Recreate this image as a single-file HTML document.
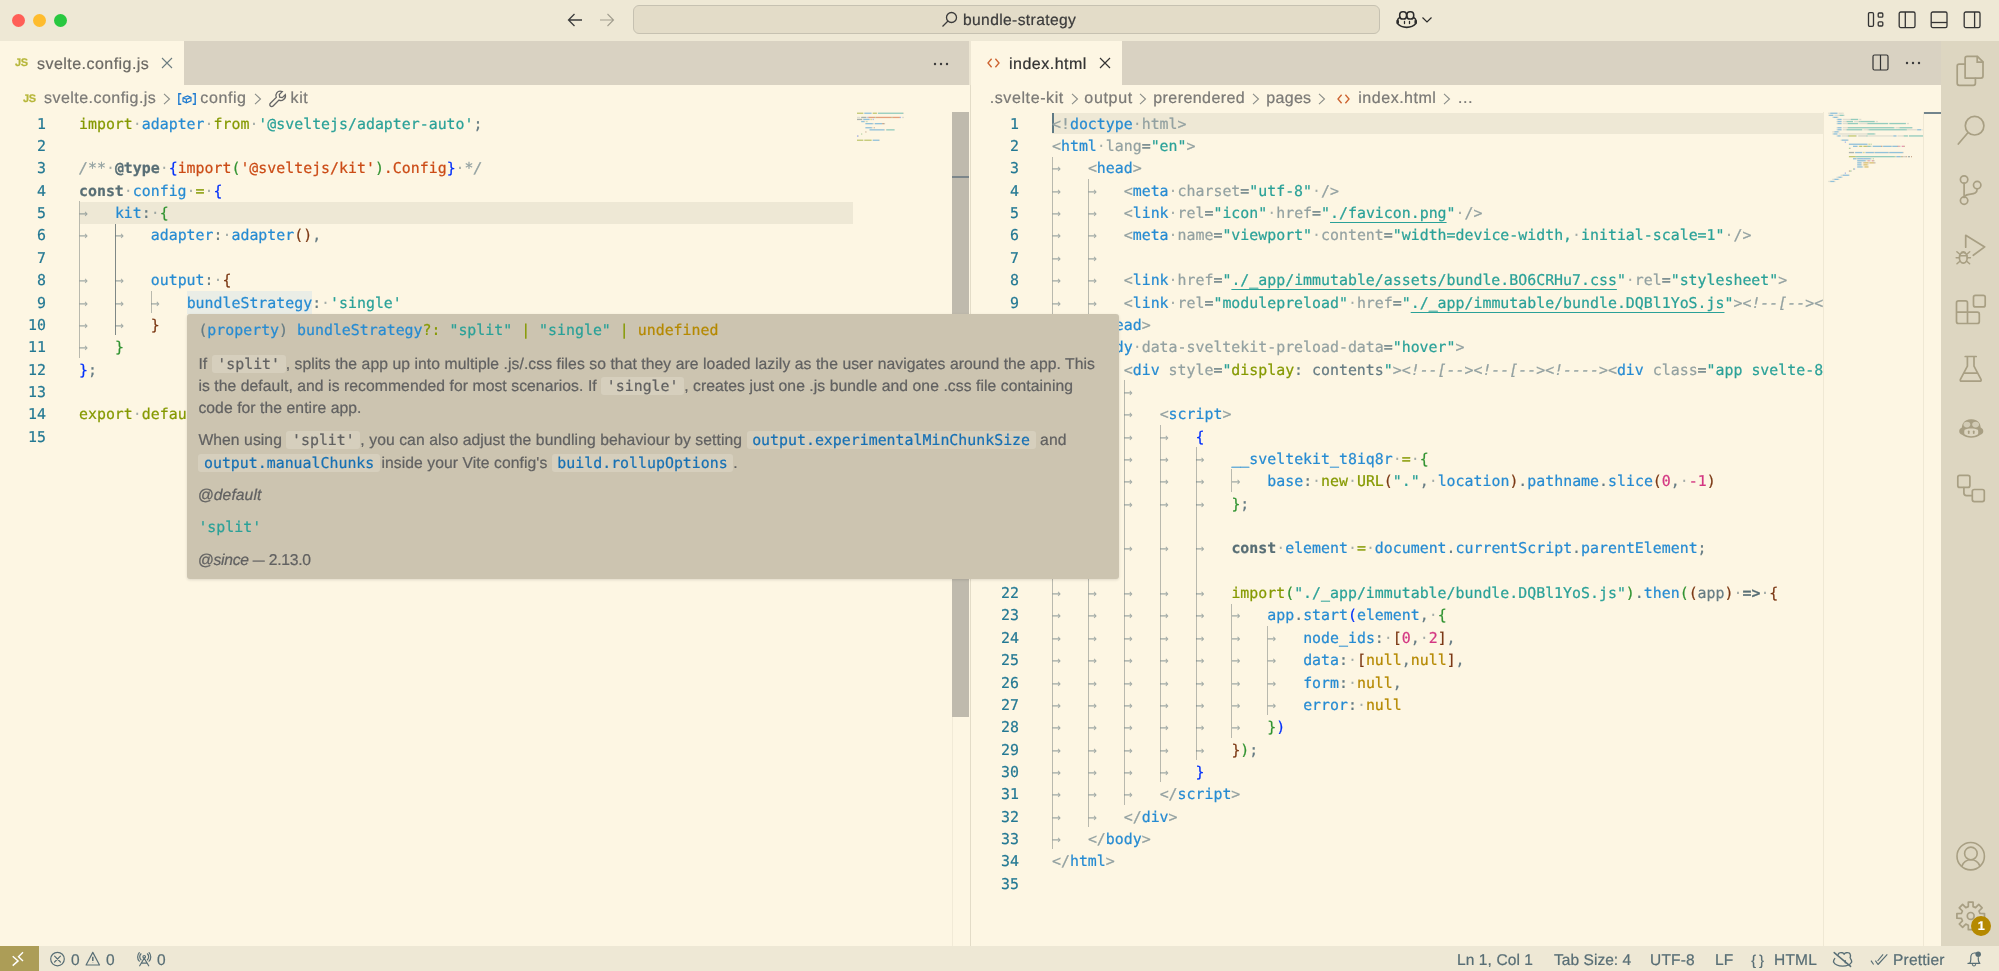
<!DOCTYPE html>
<html lang="en"><head><meta charset="utf-8"><title>bundle-strategy</title>
<style>
*{box-sizing:border-box}
html,body{margin:0;padding:0}
body{width:1999px;height:971px;position:relative;overflow:hidden;background:#FDF6E3;font-family:"Liberation Sans",sans-serif;color:#586E75;-webkit-font-smoothing:antialiased;-webkit-text-stroke:.22px currentColor;text-rendering:geometricPrecision}
.abs{position:absolute}
#title{position:absolute;left:0;top:0;width:1999px;height:41px;background:#EEE8D5}
.tl{position:absolute;top:14px;width:13px;height:13px;border-radius:50%}
#cc{position:absolute;left:633px;top:5px;width:747px;height:28.6px;border-radius:6px;background:#E3DCC8;border:1px solid #C6C1B1}
#cctext{position:absolute;left:963px;top:10.5px;font-size:15.6px;line-height:20px;color:#3B3B3B;letter-spacing:.38px;white-space:nowrap}
.tabs{position:absolute;top:41px;height:44px;background:#D9D2C2}
.tab{position:absolute;top:0;height:44px;background:#FDF6E3}
.tabtxt{position:absolute;top:13.6px;font-size:16px;line-height:20px;white-space:nowrap;color:rgba(51,51,51,.7)}
.bc{position:absolute;top:85px;height:27px;background:#FDF6E3;font-size:16px;line-height:28.8px;color:rgba(97,97,97,.82);white-space:nowrap}
.bc span{position:absolute;top:0}
.ed{position:absolute;top:111.8px;overflow:hidden;font-family:"DejaVu Sans Mono","Liberation Mono",monospace;font-size:14.9px;line-height:22.353px;color:#657B83}
.ln{position:absolute;left:0;white-space:pre;height:22.353px}
.no{position:absolute;right:0;text-align:right;color:#237893;height:22.353px}
.nums{position:absolute;top:111.8px;font-family:"DejaVu Sans Mono","Liberation Mono",monospace;font-size:14.9px;line-height:22.353px}
.gd{position:absolute;width:1px;background:#B9B9AE}
.ga{background:#7F8886;width:1.3px}
.ws{color:rgba(88,110,117,.55);-webkit-text-stroke:0}
.k{color:#859900}.v{color:#268BD2}.s{color:#2AA198}.c{color:#93A1A1;font-style:italic}
.st{color:#586E75;font-weight:bold}.ty{color:#CB4B16}.n{color:#D33682}.nl{color:#B58900}
.b1{color:#0431FA}.b2{color:#319331}.b3{color:#7B3814}
.t{color:#268BD2}.a{color:#93A1A1}.g{color:#93A1A1}.p{color:#657B83}
.u{text-decoration:underline;text-underline-offset:3.5px;text-decoration-thickness:1px}
.hl{background:#EAEDE6;padding:2.6px 0 2.2px}
#act{position:absolute;left:1941px;top:41px;width:58px;height:905px;background:#DDD6C1}
#status{position:absolute;left:0;top:945.5px;width:1999px;height:25.5px;background:#EEE8D5;font-size:15.5px;color:#586E75}
#status span{position:absolute;top:0;line-height:29px;white-space:nowrap}
#hover{position:absolute;left:186.7px;top:314px;width:932px;height:264.5px;background:#CCC4B0;border-radius:3px;color:#616161;font-size:15.7px;box-shadow:0 1px 3px rgba(0,0,0,.12)}
#hover .m{font-family:"DejaVu Sans Mono","Liberation Mono",monospace;font-size:14.9px}
#hover div{position:absolute;left:11.7px;white-space:nowrap;letter-spacing:.075px}
#hover code{font-family:"DejaVu Sans Mono","Liberation Mono",monospace;font-size:14.9px;background:#D6CFBD;border-radius:3px;padding:0 5.6px;letter-spacing:0}
#hover code.lk{color:#1670B4}
svg{position:absolute;overflow:visible}
.mini i{position:absolute;height:1.4px;display:block}
</style></head><body style="will-change:transform">

<!-- ================= title bar ================= -->
<div id="title">
  <div class="tl" style="left:12px;background:#FF5F57"></div>
  <div class="tl" style="left:33px;background:#FEBC2E"></div>
  <div class="tl" style="left:53.5px;background:#28C840"></div>
  <svg style="left:566.7px;top:12.3px" width="16" height="16" viewBox="0 0 16 16" fill="none" stroke="#3B3B3B" stroke-width="1.3"><path d="M15 8H1.5M7.5 2L1.5 8l6 6"/></svg>
  <svg style="left:599px;top:12.3px" width="16" height="16" viewBox="0 0 16 16" fill="none" stroke="#A29E8F" stroke-width="1.1"><path d="M1 8h13.5M8.5 2l6 6-6 6"/></svg>
  <div id="cc"></div>
  <svg style="left:941px;top:11px" width="17" height="17" viewBox="0 0 17 17" fill="none" stroke="#3B3B3B" stroke-width="1.3"><circle cx="10.5" cy="6.5" r="5"/><path d="M7 10L1.5 15.5"/></svg>
  <div id="cctext">bundle-strategy</div>
  <!-- copilot -->
  <svg style="left:1390px;top:5px" width="30" height="30" viewBox="1390 5 30 30" fill="none" stroke="#2B2B2B" stroke-width="1.55" stroke-linecap="round" stroke-linejoin="round">
    <rect x="1399.700" y="11.700" width="6.800" height="7.300" rx="3.100"/>
    <rect x="1406.900" y="11.700" width="6.800" height="7.300" rx="3.100"/>
    <path d="M1399.800 17.400c-1.400.9-2.200 1.700-2.300 2.900v3.300c2.100 2.500 5.500 3.800 9.200 3.800s7.100-1.300 9.200-3.800v-3.300c-.1-1.200-.9-2-2.300-2.900"/>
    <path d="M1397.700 20.200v3.300M1415.700 20.200v3.300" stroke-width="2.500" stroke-linecap="butt"/>
    <path d="M1404.500 21.400v2.100M1409.500 21.400v2.100" stroke-width="1.300"/>
  </svg>
  <svg style="left:1421.600px;top:17px" width="10" height="6" viewBox="0 0 10 6" fill="none" stroke="#2B2B2B" stroke-width="1.200"><path d="M.500.500L5 5 9.500.500"/></svg>
  <!-- layout icons -->
  <svg style="left:1867px;top:11px" width="18" height="18" viewBox="0 0 18 18" fill="none" stroke="#333" stroke-width="1.3"><rect x="1.5" y="1.7" width="5" height="13.6" rx="1.2"/><rect x="11.2" y="2" width="4.6" height="4.2" rx="1"/><rect x="11.2" y="10.8" width="4.6" height="4.2" rx="1"/></svg>
  <svg style="left:1898px;top:11px" width="18" height="18" viewBox="0 0 18 18" fill="none" stroke="#333" stroke-width="1.3"><rect x="1.2" y="1" width="15.8" height="15.6" rx="1.6"/><path d="M7.3 1v15.6"/></svg>
  <svg style="left:1930px;top:11px" width="18" height="18" viewBox="0 0 18 18" fill="none" stroke="#333" stroke-width="1.3"><rect x="1.2" y="1" width="15.8" height="15.6" rx="1.6"/><path d="M1.2 11.5h15.8"/></svg>
  <svg style="left:1963px;top:11px" width="18" height="18" viewBox="0 0 18 18" fill="none" stroke="#333" stroke-width="1.3"><rect x="1.2" y="1" width="15.8" height="15.6" rx="1.6"/><path d="M11.6 1v15.6"/></svg>
</div>

<!-- ================= left group ================= -->
<div class="tabs" style="left:0;width:970px">
  <div class="tab" style="left:0;width:184px">
    <span class="abs" style="left:15px;top:14px;font-size:11px;font-weight:bold;color:#B7B73B;line-height:16px;letter-spacing:-.3px">JS</span>
    <span class="tabtxt" style="left:37px;letter-spacing:.46px">svelte.config.js</span>
    <svg style="left:161px;top:16px" width="12" height="12" viewBox="0 0 12 12" fill="none" stroke="#6B7C80" stroke-width="1.1"><path d="M1 1l10 10M11 1L1 11"/></svg>
  </div>
  <svg style="left:932.6px;top:20.5px" width="16" height="4" viewBox="0 0 16 4" fill="#3B3B3B"><circle cx="2" cy="2" r="1.2"/><circle cx="8" cy="2" r="1.2"/><circle cx="14" cy="2" r="1.2"/></svg>
</div>
<div class="bc" style="left:0;width:970px">
  <span style="left:23px;font-size:11px;font-weight:bold;color:#B7B73B;letter-spacing:-.3px">JS</span>
  <span style="left:44px;letter-spacing:.46px">svelte.config.js</span>
  <svg style="left:163px;top:8px" width="8" height="12" viewBox="0 0 8 12" fill="none" stroke="#8A8D88" stroke-width="1.1"><path d="M1 .8L6.5 6 1 11.2"/></svg>
  <svg style="left:177.6px;top:7.5px" width="18" height="12" viewBox="0 0 18 12" fill="none" stroke="#1F7BD0" stroke-width="1.4"><path d="M3.300 .7H.8v10.600h2.500M14.700 .7h2.500v10.600h-2.500"/><path d="M5 4.800l4.600-1.900 3.400 1.500v3.400l-4.600 2L5 8.300z M5 4.800l3.400 1.500 4.600-1.900 M8.400 6.300v3.500" stroke-width="1.2"/></svg>
  <span style="left:200.3px;letter-spacing:.6px">config</span>
  <svg style="left:254px;top:8px" width="8" height="12" viewBox="0 0 8 12" fill="none" stroke="#8A8D88" stroke-width="1.1"><path d="M1 .8L6.5 6 1 11.2"/></svg>
  <svg style="left:269px;top:4.5px" width="18" height="18" viewBox="0 0 18 18" fill="none" stroke="#666" stroke-width="1.3"><path d="M16.3 4.6l-3 3-2.6-.4-.4-2.6 3-3C11.3.9 9 1.3 7.8 2.8 6.700 4.200 6.600 5.900 7.300 7.400L1.400 13.300c-.800.800-.800 2 0 2.700.700.800 1.900.800 2.700 0l5.900-5.900c1.500.7 3.300.5 4.600-.600C16.100 8.300 16.800 6.300 16.300 4.600z"/></svg>
  <span style="left:290.5px;letter-spacing:.65px">kit</span>
</div>
<div class="nums" style="left:0;width:46px;height:835px">
<div class="no" style="top:0.90px">1</div>
<div class="no" style="top:23.25px">2</div>
<div class="no" style="top:45.61px">3</div>
<div class="no" style="top:67.96px">4</div>
<div class="no" style="top:90.31px">5</div>
<div class="no" style="top:112.67px">6</div>
<div class="no" style="top:135.02px">7</div>
<div class="no" style="top:157.37px">8</div>
<div class="no" style="top:179.72px">9</div>
<div class="no" style="top:202.08px">10</div>
<div class="no" style="top:224.43px">11</div>
<div class="no" style="top:246.78px">12</div>
<div class="no" style="top:269.14px">13</div>
<div class="no" style="top:291.49px">14</div>
<div class="no" style="top:313.84px">15</div>
</div>
<div class="abs" style="left:79px;top:202px;width:774px;height:21.7px;background:#EEE8D5"></div>
<div class="ed" style="left:79px;width:774px;height:835px">
<div class="gd" style="left:0.00px;top:89.41px;height:156.47px"></div><div class="gd ga" style="left:35.88px;top:111.77px;height:111.77px"></div><div class="gd" style="left:71.76px;top:178.82px;height:22.35px"></div>
<div class="ln" style="top:0.90px"><span class="k">import</span><span class="ws">·</span><span class="v">adapter</span><span class="ws">·</span><span class="k">from</span><span class="ws">·</span><span class="s">'@sveltejs/adapter-auto'</span><span class="p">;</span></div>
<div class="ln" style="top:23.25px"></div>
<div class="ln" style="top:45.61px"><span class="c">/**</span><span class="ws">·</span><span class="st">@type</span><span class="ws">·</span><span class="b1">{</span><span class="ty">import</span><span class="b2">(</span><span class="ty">'@sveltejs/kit'</span><span class="b2">)</span><span class="ty">.Config</span><span class="b1">}</span><span class="ws">·</span><span class="c">*/</span></div>
<div class="ln" style="top:67.96px"><span class="st">const</span><span class="ws">·</span><span class="v">config</span><span class="ws">·</span><span class="k">=</span><span class="ws">·</span><span class="b1">{</span></div>
<div class="ln" style="top:90.31px"><span class="ws">→   </span><span class="v">kit</span><span class="p">:</span><span class="ws">·</span><span class="b2">{</span></div>
<div class="ln" style="top:112.67px"><span class="ws">→   </span><span class="ws">→   </span><span class="v">adapter</span><span class="p">:</span><span class="ws">·</span><span class="v">adapter</span><span class="b3">()</span><span class="p">,</span></div>
<div class="ln" style="top:135.02px"></div>
<div class="ln" style="top:157.37px"><span class="ws">→   </span><span class="ws">→   </span><span class="v">output</span><span class="p">:</span><span class="ws">·</span><span class="b3">{</span></div>
<div class="ln" style="top:179.72px"><span class="ws">→   </span><span class="ws">→   </span><span class="ws">→   </span><span class="v hl">bundleStrategy</span><span class="p">:</span><span class="ws">·</span><span class="s">'single'</span></div>
<div class="ln" style="top:202.08px"><span class="ws">→   </span><span class="ws">→   </span><span class="b3">}</span></div>
<div class="ln" style="top:224.43px"><span class="ws">→   </span><span class="b2">}</span></div>
<div class="ln" style="top:246.78px"><span class="b1">}</span><span class="p">;</span></div>
<div class="ln" style="top:269.14px"></div>
<div class="ln" style="top:291.49px"><span class="k">export</span><span class="ws">·</span><span class="k">default</span><span class="ws">·</span><span class="v">config</span><span class="p">;</span></div>
<div class="ln" style="top:313.84px"></div>
</div>
<!-- left minimap + scrollbar -->
<div class="mini"><svg style="left:0;top:0" width="1999" height="971"><rect x="857.0" y="112.6" width="6.3" height="1.3" fill="#859900" fill-opacity="0.5"/><rect x="864.3" y="112.6" width="7.3" height="1.3" fill="#268BD2" fill-opacity="0.5"/><rect x="872.7" y="112.6" width="4.2" height="1.3" fill="#859900" fill-opacity="0.5"/><rect x="877.9" y="112.6" width="25.1" height="1.3" fill="#2AA198" fill-opacity="0.5"/><rect x="902.9" y="112.6" width="1.0" height="1.3" fill="#657B83" fill-opacity="0.28"/><rect x="857.0" y="116.8" width="3.1" height="1.3" fill="#93A1A1" fill-opacity="0.28"/><rect x="861.2" y="116.8" width="5.2" height="1.3" fill="#586E75" fill-opacity="0.5"/><rect x="867.4" y="116.8" width="1.0" height="1.3" fill="#0431FA" fill-opacity="0.4"/><rect x="868.5" y="116.8" width="6.3" height="1.3" fill="#CB4B16" fill-opacity="0.5"/><rect x="874.7" y="116.8" width="1.0" height="1.3" fill="#319331" fill-opacity="0.4"/><rect x="875.8" y="116.8" width="15.7" height="1.3" fill="#CB4B16" fill-opacity="0.5"/><rect x="891.5" y="116.8" width="1.0" height="1.3" fill="#319331" fill-opacity="0.4"/><rect x="892.5" y="116.8" width="7.3" height="1.3" fill="#CB4B16" fill-opacity="0.5"/><rect x="899.8" y="116.8" width="1.0" height="1.3" fill="#0431FA" fill-opacity="0.4"/><rect x="901.9" y="116.8" width="2.1" height="1.3" fill="#93A1A1" fill-opacity="0.28"/><rect x="857.0" y="118.8" width="5.2" height="1.3" fill="#586E75" fill-opacity="0.5"/><rect x="863.3" y="118.8" width="6.3" height="1.3" fill="#268BD2" fill-opacity="0.5"/><rect x="870.6" y="118.8" width="1.0" height="1.3" fill="#859900" fill-opacity="0.5"/><rect x="872.7" y="118.8" width="1.0" height="1.3" fill="#0431FA" fill-opacity="0.4"/><rect x="861.2" y="120.9" width="3.1" height="1.3" fill="#268BD2" fill-opacity="0.5"/><rect x="864.3" y="120.9" width="1.0" height="1.3" fill="#657B83" fill-opacity="0.28"/><rect x="866.4" y="120.9" width="1.0" height="1.3" fill="#319331" fill-opacity="0.4"/><rect x="865.4" y="123.0" width="7.3" height="1.3" fill="#268BD2" fill-opacity="0.5"/><rect x="872.7" y="123.0" width="1.0" height="1.3" fill="#657B83" fill-opacity="0.28"/><rect x="874.7" y="123.0" width="7.3" height="1.3" fill="#268BD2" fill-opacity="0.5"/><rect x="882.1" y="123.0" width="2.1" height="1.3" fill="#7B3814" fill-opacity="0.4"/><rect x="884.1" y="123.0" width="1.0" height="1.3" fill="#657B83" fill-opacity="0.28"/><rect x="865.4" y="127.1" width="6.3" height="1.3" fill="#268BD2" fill-opacity="0.5"/><rect x="871.6" y="127.1" width="1.0" height="1.3" fill="#657B83" fill-opacity="0.28"/><rect x="873.7" y="127.1" width="1.0" height="1.3" fill="#7B3814" fill-opacity="0.4"/><rect x="869.5" y="129.2" width="14.6" height="1.3" fill="#268BD2" fill-opacity="0.5"/><rect x="884.1" y="129.2" width="1.0" height="1.3" fill="#657B83" fill-opacity="0.28"/><rect x="886.2" y="129.2" width="8.4" height="1.3" fill="#2AA198" fill-opacity="0.5"/><rect x="865.4" y="131.3" width="1.0" height="1.3" fill="#7B3814" fill-opacity="0.4"/><rect x="861.2" y="133.4" width="1.0" height="1.3" fill="#319331" fill-opacity="0.4"/><rect x="857.0" y="135.4" width="1.0" height="1.3" fill="#0431FA" fill-opacity="0.4"/><rect x="858.0" y="135.4" width="1.0" height="1.3" fill="#657B83" fill-opacity="0.28"/><rect x="857.0" y="139.6" width="6.3" height="1.3" fill="#859900" fill-opacity="0.5"/><rect x="864.3" y="139.6" width="7.3" height="1.3" fill="#859900" fill-opacity="0.5"/><rect x="872.7" y="139.6" width="6.3" height="1.3" fill="#268BD2" fill-opacity="0.5"/><rect x="878.9" y="139.6" width="1.0" height="1.3" fill="#657B83" fill-opacity="0.28"/></svg></div>
<div class="abs" style="left:952.3px;top:112px;width:17.1px;height:605px;background:#BFBAAD"></div>
<div class="abs" style="left:952px;top:717px;width:1px;height:229px;background:#F1EAD7"></div>
<div class="abs" style="left:952px;top:175.5px;width:17px;height:2.5px;background:#7C868A"></div>
<div class="abs" style="left:970px;top:85px;width:1px;height:861px;background:#E3DCC8"></div>
<div class="abs" style="left:969.4px;top:41px;width:1.7px;height:44px;background:#EDE6D3"></div>

<!-- ================= right group ================= -->
<div class="tabs" style="left:971px;width:970px">
  <div class="tab" style="left:0;width:151px">
    <svg style="left:16px;top:17px" width="13" height="10" viewBox="0 0 13 10" fill="none" stroke="#CD6431" stroke-width="1.35"><path d="M4.600.800L1 5l3.600 4.200M8.400.8L12 5 8.400 9.200"/></svg>
    <span class="tabtxt" style="left:38px;color:#333;letter-spacing:.5px">index.html</span>
    <svg style="left:128px;top:16px" width="12" height="12" viewBox="0 0 12 12" fill="none" stroke="#333" stroke-width="1.2"><path d="M1 1l10 10M11 1L1 11"/></svg>
  </div>
  <svg style="left:901px;top:13px" width="17" height="17" viewBox="0 0 17 17" fill="none" stroke="#333" stroke-width="1.2"><rect x="1" y="1" width="15" height="15" rx="1.5"/><path d="M8.5 1v15"/></svg>
  <svg style="left:934px;top:20px" width="16" height="4" viewBox="0 0 16 4" fill="#3B3B3B"><circle cx="2" cy="2" r="1.2"/><circle cx="8" cy="2" r="1.2"/><circle cx="14" cy="2" r="1.2"/></svg>
</div>
<div class="bc" style="left:971px;width:970px">
  <span style="left:18.7px;letter-spacing:.6px">.svelte-kit</span>
  <svg style="left:100px;top:8px" width="8" height="12" viewBox="0 0 8 12" fill="none" stroke="#8A8D88" stroke-width="1.1"><path d="M1 .8L6.5 6 1 11.2"/></svg>
  <span style="left:113.3px;letter-spacing:.68px">output</span>
  <svg style="left:168px;top:8px" width="8" height="12" viewBox="0 0 8 12" fill="none" stroke="#8A8D88" stroke-width="1.1"><path d="M1 .8L6.5 6 1 11.2"/></svg>
  <span style="left:182.3px;letter-spacing:.42px">prerendered</span>
  <svg style="left:281px;top:8px" width="8" height="12" viewBox="0 0 8 12" fill="none" stroke="#8A8D88" stroke-width="1.1"><path d="M1 .8L6.5 6 1 11.2"/></svg>
  <span style="left:295.3px;letter-spacing:.3px">pages</span>
  <svg style="left:347px;top:8px" width="8" height="12" viewBox="0 0 8 12" fill="none" stroke="#8A8D88" stroke-width="1.1"><path d="M1 .8L6.5 6 1 11.2"/></svg>
  <svg style="left:366px;top:8.5px" width="13" height="10" viewBox="0 0 13 10" fill="none" stroke="#CD6431" stroke-width="1.35"><path d="M4.600.800L1 5l3.600 4.200M8.400.8L12 5 8.400 9.200"/></svg>
  <span style="left:387.3px;letter-spacing:.52px">index.html</span>
  <svg style="left:472px;top:8px" width="8" height="12" viewBox="0 0 8 12" fill="none" stroke="#8A8D88" stroke-width="1.1"><path d="M1 .8L6.5 6 1 11.2"/></svg>
  <span style="left:486.3px">…</span>
</div>
<div class="nums" style="left:971px;width:48px;height:835px">
<div class="no" style="top:0.90px">1</div>
<div class="no" style="top:23.25px">2</div>
<div class="no" style="top:45.61px">3</div>
<div class="no" style="top:67.96px">4</div>
<div class="no" style="top:90.31px">5</div>
<div class="no" style="top:112.67px">6</div>
<div class="no" style="top:135.02px">7</div>
<div class="no" style="top:157.37px">8</div>
<div class="no" style="top:179.72px">9</div>
<div class="no" style="top:202.08px">10</div>
<div class="no" style="top:224.43px">11</div>
<div class="no" style="top:246.78px">12</div>
<div class="no" style="top:269.14px">13</div>
<div class="no" style="top:291.49px">14</div>
<div class="no" style="top:313.84px">15</div>
<div class="no" style="top:336.19px">16</div>
<div class="no" style="top:358.55px">17</div>
<div class="no" style="top:380.90px">18</div>
<div class="no" style="top:403.25px">19</div>
<div class="no" style="top:425.61px">20</div>
<div class="no" style="top:447.96px">21</div>
<div class="no" style="top:470.31px">22</div>
<div class="no" style="top:492.67px">23</div>
<div class="no" style="top:515.02px">24</div>
<div class="no" style="top:537.37px">25</div>
<div class="no" style="top:559.73px">26</div>
<div class="no" style="top:582.08px">27</div>
<div class="no" style="top:604.43px">28</div>
<div class="no" style="top:626.78px">29</div>
<div class="no" style="top:649.14px">30</div>
<div class="no" style="top:671.49px">31</div>
<div class="no" style="top:693.84px">32</div>
<div class="no" style="top:716.20px">33</div>
<div class="no" style="top:738.55px">34</div>
<div class="no" style="top:760.90px">35</div>
</div>
<div class="abs" style="left:1052px;top:112.5px;width:771.5px;height:21.7px;background:#EEE8D5"></div>
<div class="abs" style="left:1052px;top:113px;width:2px;height:20px;background:#5F7A85"></div>
<div class="ed" style="left:1052px;width:771px;height:835px">
<div class="gd" style="left:0.00px;top:44.71px;height:692.94px"></div><div class="gd" style="left:35.88px;top:67.06px;height:648.24px"></div><div class="gd" style="left:71.76px;top:268.24px;height:424.71px"></div><div class="gd" style="left:107.64px;top:312.94px;height:357.65px"></div><div class="gd" style="left:143.52px;top:335.30px;height:312.94px"></div><div class="gd" style="left:179.40px;top:357.65px;height:22.35px"></div><div class="gd" style="left:179.40px;top:491.77px;height:134.12px"></div><div class="gd" style="left:215.28px;top:514.12px;height:89.41px"></div>
<div class="ln" style="top:0.90px"><span class="g">&lt;!</span><span class="t">doctype</span><span class="ws">·</span><span class="a">html</span><span class="g">&gt;</span></div>
<div class="ln" style="top:23.25px"><span class="g">&lt;</span><span class="t">html</span><span class="ws">·</span><span class="a">lang</span><span class="p">=</span><span class="s">"en"</span><span class="g">&gt;</span></div>
<div class="ln" style="top:45.61px"><span class="ws">→   </span><span class="g">&lt;</span><span class="t">head</span><span class="g">&gt;</span></div>
<div class="ln" style="top:67.96px"><span class="ws">→   </span><span class="ws">→   </span><span class="g">&lt;</span><span class="t">meta</span><span class="ws">·</span><span class="a">charset</span><span class="p">=</span><span class="s">"utf-8"</span><span class="ws">·</span><span class="g">/&gt;</span></div>
<div class="ln" style="top:90.31px"><span class="ws">→   </span><span class="ws">→   </span><span class="g">&lt;</span><span class="t">link</span><span class="ws">·</span><span class="a">rel</span><span class="p">=</span><span class="s">"icon"</span><span class="ws">·</span><span class="a">href</span><span class="p">=</span><span class="s">"</span><span class="s u">./favicon.png</span><span class="s">"</span><span class="ws">·</span><span class="g">/&gt;</span></div>
<div class="ln" style="top:112.67px"><span class="ws">→   </span><span class="ws">→   </span><span class="g">&lt;</span><span class="t">meta</span><span class="ws">·</span><span class="a">name</span><span class="p">=</span><span class="s">"viewport"</span><span class="ws">·</span><span class="a">content</span><span class="p">=</span><span class="s">"width=device-width,</span><span class="ws">·</span><span class="s">initial-scale=1"</span><span class="ws">·</span><span class="g">/&gt;</span></div>
<div class="ln" style="top:135.02px"><span class="ws">→   </span><span class="ws">→   </span></div>
<div class="ln" style="top:157.37px"><span class="ws">→   </span><span class="ws">→   </span><span class="g">&lt;</span><span class="t">link</span><span class="ws">·</span><span class="a">href</span><span class="p">=</span><span class="s">"</span><span class="s u">./_app/immutable/assets/bundle.BO6CRHu7.css</span><span class="s">"</span><span class="ws">·</span><span class="a">rel</span><span class="p">=</span><span class="s">"stylesheet"</span><span class="g">&gt;</span></div>
<div class="ln" style="top:179.72px"><span class="ws">→   </span><span class="ws">→   </span><span class="g">&lt;</span><span class="t">link</span><span class="ws">·</span><span class="a">rel</span><span class="p">=</span><span class="s">"modulepreload"</span><span class="ws">·</span><span class="a">href</span><span class="p">=</span><span class="s">"</span><span class="s u">./_app/immutable/bundle.DQBl1YoS.js</span><span class="s">"</span><span class="g">&gt;</span><span class="c">&lt;!--[--&gt;</span><span class="g">&lt;</span><span class="t">link</span><span class="ws">·</span><span class="a">rel</span></div>
<div class="ln" style="top:202.08px"><span class="ws">→   </span><span class="g">&lt;/</span><span class="t">head</span><span class="g">&gt;</span></div>
<div class="ln" style="top:224.43px"><span class="ws">→   </span><span class="g">&lt;</span><span class="t">body</span><span class="ws">·</span><span class="a">data-sveltekit-preload-data</span><span class="p">=</span><span class="s">"hover"</span><span class="g">&gt;</span></div>
<div class="ln" style="top:246.78px"><span class="ws">→   →   </span><span class="g">&lt;</span><span class="t">div</span> <span class="a">style</span>=<span class="s">"</span><span class="k">display</span>: contents<span class="s">"</span><span class="g">&gt;</span><span class="c">&lt;!--[--&gt;</span><span class="c">&lt;!--[--&gt;</span><span class="c">&lt;!----&gt;</span><span class="g">&lt;</span><span class="t">div</span> <span class="a">class</span>=<span class="s">"app svelte-8hd3kl"</span><span class="g">&gt;</span></div>
<div class="ln" style="top:269.14px"><span class="ws">→   </span><span class="ws">→   </span><span class="ws">→   </span></div>
<div class="ln" style="top:291.49px"><span class="ws">→   </span><span class="ws">→   </span><span class="ws">→   </span><span class="g">&lt;</span><span class="t">script</span><span class="g">&gt;</span></div>
<div class="ln" style="top:313.84px"><span class="ws">→   </span><span class="ws">→   </span><span class="ws">→   </span><span class="ws">→   </span><span class="b1">{</span></div>
<div class="ln" style="top:336.19px"><span class="ws">→   </span><span class="ws">→   </span><span class="ws">→   </span><span class="ws">→   </span><span class="ws">→   </span><span class="v">__sveltekit_t8iq8r</span><span class="ws">·</span><span class="k">=</span><span class="ws">·</span><span class="b2">{</span></div>
<div class="ln" style="top:358.55px"><span class="ws">→   </span><span class="ws">→   </span><span class="ws">→   </span><span class="ws">→   </span><span class="ws">→   </span><span class="ws">→   </span><span class="v">base</span><span class="p">:</span><span class="ws">·</span><span class="k">new</span><span class="ws">·</span><span class="k">URL</span><span class="b3">(</span><span class="s">"."</span><span class="p">,</span><span class="ws">·</span><span class="v">location</span><span class="b3">)</span><span class="p">.</span><span class="v">pathname</span><span class="p">.</span><span class="v">slice</span><span class="b3">(</span><span class="n">0</span><span class="p">,</span><span class="ws">·</span><span class="n">-1</span><span class="b3">)</span></div>
<div class="ln" style="top:380.90px"><span class="ws">→   </span><span class="ws">→   </span><span class="ws">→   </span><span class="ws">→   </span><span class="ws">→   </span><span class="b2">}</span><span class="p">;</span></div>
<div class="ln" style="top:403.25px"></div>
<div class="ln" style="top:425.61px"><span class="ws">→   </span><span class="ws">→   </span><span class="ws">→   </span><span class="ws">→   </span><span class="ws">→   </span><span class="st">const</span><span class="ws">·</span><span class="v">element</span><span class="ws">·</span><span class="k">=</span><span class="ws">·</span><span class="v">document</span><span class="p">.</span><span class="v">currentScript</span><span class="p">.</span><span class="v">parentElement</span><span class="p">;</span></div>
<div class="ln" style="top:447.96px"></div>
<div class="ln" style="top:470.31px"><span class="ws">→   </span><span class="ws">→   </span><span class="ws">→   </span><span class="ws">→   </span><span class="ws">→   </span><span class="k">import</span><span class="b2">(</span><span class="s">"./_app/immutable/bundle.DQBl1YoS.js"</span><span class="b2">)</span><span class="p">.</span><span class="v">then</span><span class="b2">(</span><span class="b3">(</span><span class="p">app</span><span class="b3">)</span><span class="ws">·</span><span class="st">=&gt;</span><span class="ws">·</span><span class="b3">{</span></div>
<div class="ln" style="top:492.67px"><span class="ws">→   </span><span class="ws">→   </span><span class="ws">→   </span><span class="ws">→   </span><span class="ws">→   </span><span class="ws">→   </span><span class="v">app</span><span class="p">.</span><span class="v">start</span><span class="b1">(</span><span class="v">element</span><span class="p">,</span><span class="ws">·</span><span class="b2">{</span></div>
<div class="ln" style="top:515.02px"><span class="ws">→   </span><span class="ws">→   </span><span class="ws">→   </span><span class="ws">→   </span><span class="ws">→   </span><span class="ws">→   </span><span class="ws">→   </span><span class="v">node_ids</span><span class="p">:</span><span class="ws">·</span><span class="b3">[</span><span class="n">0</span><span class="p">,</span><span class="ws">·</span><span class="n">2</span><span class="b3">]</span><span class="p">,</span></div>
<div class="ln" style="top:537.37px"><span class="ws">→   </span><span class="ws">→   </span><span class="ws">→   </span><span class="ws">→   </span><span class="ws">→   </span><span class="ws">→   </span><span class="ws">→   </span><span class="v">data</span><span class="p">:</span><span class="ws">·</span><span class="b3">[</span><span class="nl">null</span><span class="p">,</span><span class="nl">null</span><span class="b3">]</span><span class="p">,</span></div>
<div class="ln" style="top:559.73px"><span class="ws">→   </span><span class="ws">→   </span><span class="ws">→   </span><span class="ws">→   </span><span class="ws">→   </span><span class="ws">→   </span><span class="ws">→   </span><span class="v">form</span><span class="p">:</span><span class="ws">·</span><span class="nl">null</span><span class="p">,</span></div>
<div class="ln" style="top:582.08px"><span class="ws">→   </span><span class="ws">→   </span><span class="ws">→   </span><span class="ws">→   </span><span class="ws">→   </span><span class="ws">→   </span><span class="ws">→   </span><span class="v">error</span><span class="p">:</span><span class="ws">·</span><span class="nl">null</span></div>
<div class="ln" style="top:604.43px"><span class="ws">→   </span><span class="ws">→   </span><span class="ws">→   </span><span class="ws">→   </span><span class="ws">→   </span><span class="ws">→   </span><span class="b2">}</span><span class="b1">)</span></div>
<div class="ln" style="top:626.78px"><span class="ws">→   </span><span class="ws">→   </span><span class="ws">→   </span><span class="ws">→   </span><span class="ws">→   </span><span class="b3">}</span><span class="b2">)</span><span class="p">;</span></div>
<div class="ln" style="top:649.14px"><span class="ws">→   </span><span class="ws">→   </span><span class="ws">→   </span><span class="ws">→   </span><span class="b1">}</span></div>
<div class="ln" style="top:671.49px"><span class="ws">→   </span><span class="ws">→   </span><span class="ws">→   </span><span class="g">&lt;/</span><span class="t">script</span><span class="g">&gt;</span></div>
<div class="ln" style="top:693.84px"><span class="ws">→   </span><span class="ws">→   </span><span class="g">&lt;/</span><span class="t">div</span><span class="g">&gt;</span></div>
<div class="ln" style="top:716.20px"><span class="ws">→   </span><span class="g">&lt;/</span><span class="t">body</span><span class="g">&gt;</span></div>
<div class="ln" style="top:738.55px"><span class="g">&lt;/</span><span class="t">html</span><span class="g">&gt;</span></div>
<div class="ln" style="top:760.90px"></div>
</div>
<div class="mini"><svg style="left:0;top:0" width="1999" height="971"><rect x="1828.2" y="112.6" width="2.1" height="1.3" fill="#93A1A1" fill-opacity="0.28"/><rect x="1830.3" y="112.6" width="7.2" height="1.3" fill="#268BD2" fill-opacity="0.5"/><rect x="1838.5" y="112.6" width="4.1" height="1.3" fill="#93A1A1" fill-opacity="0.28"/><rect x="1842.7" y="112.6" width="1.0" height="1.3" fill="#93A1A1" fill-opacity="0.28"/><rect x="1828.2" y="114.7" width="1.0" height="1.3" fill="#93A1A1" fill-opacity="0.28"/><rect x="1829.2" y="114.7" width="4.1" height="1.3" fill="#268BD2" fill-opacity="0.5"/><rect x="1834.4" y="114.7" width="4.1" height="1.3" fill="#93A1A1" fill-opacity="0.28"/><rect x="1838.5" y="114.7" width="1.0" height="1.3" fill="#657B83" fill-opacity="0.28"/><rect x="1839.6" y="114.7" width="4.1" height="1.3" fill="#2AA198" fill-opacity="0.5"/><rect x="1843.7" y="114.7" width="1.0" height="1.3" fill="#93A1A1" fill-opacity="0.28"/><rect x="1832.3" y="116.7" width="1.0" height="1.3" fill="#93A1A1" fill-opacity="0.28"/><rect x="1833.4" y="116.7" width="4.1" height="1.3" fill="#268BD2" fill-opacity="0.5"/><rect x="1837.5" y="116.7" width="1.0" height="1.3" fill="#93A1A1" fill-opacity="0.28"/><rect x="1836.5" y="118.8" width="1.0" height="1.3" fill="#93A1A1" fill-opacity="0.28"/><rect x="1837.5" y="118.8" width="4.1" height="1.3" fill="#268BD2" fill-opacity="0.5"/><rect x="1842.7" y="118.8" width="7.2" height="1.3" fill="#93A1A1" fill-opacity="0.28"/><rect x="1849.9" y="118.8" width="1.0" height="1.3" fill="#657B83" fill-opacity="0.28"/><rect x="1851.0" y="118.8" width="7.2" height="1.3" fill="#2AA198" fill-opacity="0.5"/><rect x="1859.2" y="118.8" width="2.1" height="1.3" fill="#93A1A1" fill-opacity="0.28"/><rect x="1836.5" y="120.9" width="1.0" height="1.3" fill="#93A1A1" fill-opacity="0.28"/><rect x="1837.5" y="120.9" width="4.1" height="1.3" fill="#268BD2" fill-opacity="0.5"/><rect x="1842.7" y="120.9" width="3.1" height="1.3" fill="#93A1A1" fill-opacity="0.28"/><rect x="1845.8" y="120.9" width="1.0" height="1.3" fill="#657B83" fill-opacity="0.28"/><rect x="1846.8" y="120.9" width="6.2" height="1.3" fill="#2AA198" fill-opacity="0.5"/><rect x="1854.1" y="120.9" width="4.1" height="1.3" fill="#93A1A1" fill-opacity="0.28"/><rect x="1858.2" y="120.9" width="1.0" height="1.3" fill="#657B83" fill-opacity="0.28"/><rect x="1859.2" y="120.9" width="1.0" height="1.3" fill="#2AA198" fill-opacity="0.5"/><rect x="1860.3" y="120.9" width="13.5" height="1.3" fill="#2AA198" fill-opacity="0.5"/><rect x="1873.7" y="120.9" width="1.0" height="1.3" fill="#2AA198" fill-opacity="0.5"/><rect x="1875.8" y="120.9" width="2.1" height="1.3" fill="#93A1A1" fill-opacity="0.28"/><rect x="1836.5" y="122.9" width="1.0" height="1.3" fill="#93A1A1" fill-opacity="0.28"/><rect x="1837.5" y="122.9" width="4.1" height="1.3" fill="#268BD2" fill-opacity="0.5"/><rect x="1842.7" y="122.9" width="4.1" height="1.3" fill="#93A1A1" fill-opacity="0.28"/><rect x="1846.8" y="122.9" width="1.0" height="1.3" fill="#657B83" fill-opacity="0.28"/><rect x="1847.9" y="122.9" width="10.3" height="1.3" fill="#2AA198" fill-opacity="0.5"/><rect x="1859.2" y="122.9" width="7.2" height="1.3" fill="#93A1A1" fill-opacity="0.28"/><rect x="1866.5" y="122.9" width="1.0" height="1.3" fill="#657B83" fill-opacity="0.28"/><rect x="1867.5" y="122.9" width="20.7" height="1.3" fill="#2AA198" fill-opacity="0.5"/><rect x="1889.3" y="122.9" width="16.6" height="1.3" fill="#2AA198" fill-opacity="0.5"/><rect x="1906.9" y="122.9" width="2.1" height="1.3" fill="#93A1A1" fill-opacity="0.28"/><rect x="1836.5" y="127.1" width="1.0" height="1.3" fill="#93A1A1" fill-opacity="0.28"/><rect x="1837.5" y="127.1" width="4.1" height="1.3" fill="#268BD2" fill-opacity="0.5"/><rect x="1842.7" y="127.1" width="4.1" height="1.3" fill="#93A1A1" fill-opacity="0.28"/><rect x="1846.8" y="127.1" width="1.0" height="1.3" fill="#657B83" fill-opacity="0.28"/><rect x="1847.9" y="127.1" width="1.0" height="1.3" fill="#2AA198" fill-opacity="0.5"/><rect x="1848.9" y="127.1" width="44.5" height="1.3" fill="#2AA198" fill-opacity="0.5"/><rect x="1893.4" y="127.1" width="1.0" height="1.3" fill="#2AA198" fill-opacity="0.5"/><rect x="1895.5" y="127.1" width="3.1" height="1.3" fill="#93A1A1" fill-opacity="0.28"/><rect x="1898.6" y="127.1" width="1.0" height="1.3" fill="#657B83" fill-opacity="0.28"/><rect x="1899.6" y="127.1" width="12.4" height="1.3" fill="#2AA198" fill-opacity="0.5"/><rect x="1912.0" y="127.1" width="1.0" height="1.3" fill="#93A1A1" fill-opacity="0.28"/><rect x="1836.5" y="129.1" width="1.0" height="1.3" fill="#93A1A1" fill-opacity="0.28"/><rect x="1837.5" y="129.1" width="4.1" height="1.3" fill="#268BD2" fill-opacity="0.5"/><rect x="1842.7" y="129.1" width="3.1" height="1.3" fill="#93A1A1" fill-opacity="0.28"/><rect x="1845.8" y="129.1" width="1.0" height="1.3" fill="#657B83" fill-opacity="0.28"/><rect x="1846.8" y="129.1" width="15.5" height="1.3" fill="#2AA198" fill-opacity="0.5"/><rect x="1863.4" y="129.1" width="4.1" height="1.3" fill="#93A1A1" fill-opacity="0.28"/><rect x="1867.5" y="129.1" width="1.0" height="1.3" fill="#657B83" fill-opacity="0.28"/><rect x="1868.6" y="129.1" width="1.0" height="1.3" fill="#2AA198" fill-opacity="0.5"/><rect x="1869.6" y="129.1" width="36.2" height="1.3" fill="#2AA198" fill-opacity="0.5"/><rect x="1905.8" y="129.1" width="1.0" height="1.3" fill="#2AA198" fill-opacity="0.5"/><rect x="1906.9" y="129.1" width="1.0" height="1.3" fill="#93A1A1" fill-opacity="0.28"/><rect x="1907.9" y="129.1" width="8.3" height="1.3" fill="#93A1A1" fill-opacity="0.28"/><rect x="1916.2" y="129.1" width="1.0" height="1.3" fill="#93A1A1" fill-opacity="0.28"/><rect x="1917.2" y="129.1" width="4.1" height="1.3" fill="#268BD2" fill-opacity="0.5"/><rect x="1922.4" y="129.1" width="0.8" height="1.3" fill="#93A1A1" fill-opacity="0.28"/><rect x="1832.3" y="131.2" width="2.1" height="1.3" fill="#93A1A1" fill-opacity="0.28"/><rect x="1834.4" y="131.2" width="4.1" height="1.3" fill="#268BD2" fill-opacity="0.5"/><rect x="1838.5" y="131.2" width="1.0" height="1.3" fill="#93A1A1" fill-opacity="0.28"/><rect x="1832.3" y="133.3" width="1.0" height="1.3" fill="#93A1A1" fill-opacity="0.28"/><rect x="1833.4" y="133.3" width="4.1" height="1.3" fill="#268BD2" fill-opacity="0.5"/><rect x="1838.5" y="133.3" width="27.9" height="1.3" fill="#93A1A1" fill-opacity="0.28"/><rect x="1866.5" y="133.3" width="1.0" height="1.3" fill="#657B83" fill-opacity="0.28"/><rect x="1867.5" y="133.3" width="7.2" height="1.3" fill="#2AA198" fill-opacity="0.5"/><rect x="1874.8" y="133.3" width="1.0" height="1.3" fill="#93A1A1" fill-opacity="0.28"/><rect x="1836.5" y="135.3" width="1.0" height="1.3" fill="#93A1A1" fill-opacity="0.28"/><rect x="1837.5" y="135.3" width="3.1" height="1.3" fill="#268BD2" fill-opacity="0.5"/><rect x="1841.7" y="135.3" width="5.2" height="1.3" fill="#93A1A1" fill-opacity="0.28"/><rect x="1846.8" y="135.3" width="1.0" height="1.3" fill="#657B83" fill-opacity="0.28"/><rect x="1847.9" y="135.3" width="1.0" height="1.3" fill="#2AA198" fill-opacity="0.5"/><rect x="1848.9" y="135.3" width="7.2" height="1.3" fill="#859900" fill-opacity="0.5"/><rect x="1856.1" y="135.3" width="1.0" height="1.3" fill="#657B83" fill-opacity="0.28"/><rect x="1858.2" y="135.3" width="8.3" height="1.3" fill="#657B83" fill-opacity="0.28"/><rect x="1866.5" y="135.3" width="1.0" height="1.3" fill="#2AA198" fill-opacity="0.5"/><rect x="1867.5" y="135.3" width="1.0" height="1.3" fill="#93A1A1" fill-opacity="0.28"/><rect x="1868.6" y="135.3" width="23.8" height="1.3" fill="#93A1A1" fill-opacity="0.28"/><rect x="1892.4" y="135.3" width="1.0" height="1.3" fill="#93A1A1" fill-opacity="0.28"/><rect x="1893.4" y="135.3" width="3.1" height="1.3" fill="#268BD2" fill-opacity="0.5"/><rect x="1897.5" y="135.3" width="5.2" height="1.3" fill="#93A1A1" fill-opacity="0.28"/><rect x="1902.7" y="135.3" width="1.0" height="1.3" fill="#657B83" fill-opacity="0.28"/><rect x="1903.8" y="135.3" width="4.1" height="1.3" fill="#2AA198" fill-opacity="0.5"/><rect x="1908.9" y="135.3" width="14.3" height="1.3" fill="#2AA198" fill-opacity="0.5"/><rect x="1840.6" y="139.5" width="1.0" height="1.3" fill="#93A1A1" fill-opacity="0.28"/><rect x="1841.7" y="139.5" width="6.2" height="1.3" fill="#268BD2" fill-opacity="0.5"/><rect x="1847.9" y="139.5" width="1.0" height="1.3" fill="#93A1A1" fill-opacity="0.28"/><rect x="1844.8" y="141.5" width="1.0" height="1.3" fill="#0431FA" fill-opacity="0.4"/><rect x="1848.9" y="143.6" width="18.6" height="1.3" fill="#268BD2" fill-opacity="0.5"/><rect x="1868.6" y="143.6" width="1.0" height="1.3" fill="#859900" fill-opacity="0.5"/><rect x="1870.6" y="143.6" width="1.0" height="1.3" fill="#319331" fill-opacity="0.4"/><rect x="1853.0" y="145.7" width="4.1" height="1.3" fill="#268BD2" fill-opacity="0.5"/><rect x="1857.2" y="145.7" width="1.0" height="1.3" fill="#657B83" fill-opacity="0.28"/><rect x="1859.2" y="145.7" width="3.1" height="1.3" fill="#859900" fill-opacity="0.5"/><rect x="1863.4" y="145.7" width="3.1" height="1.3" fill="#859900" fill-opacity="0.5"/><rect x="1866.5" y="145.7" width="1.0" height="1.3" fill="#7B3814" fill-opacity="0.4"/><rect x="1867.5" y="145.7" width="3.1" height="1.3" fill="#2AA198" fill-opacity="0.5"/><rect x="1870.6" y="145.7" width="1.0" height="1.3" fill="#657B83" fill-opacity="0.28"/><rect x="1872.7" y="145.7" width="8.3" height="1.3" fill="#268BD2" fill-opacity="0.5"/><rect x="1881.0" y="145.7" width="1.0" height="1.3" fill="#7B3814" fill-opacity="0.4"/><rect x="1882.0" y="145.7" width="1.0" height="1.3" fill="#657B83" fill-opacity="0.28"/><rect x="1883.1" y="145.7" width="8.3" height="1.3" fill="#268BD2" fill-opacity="0.5"/><rect x="1891.3" y="145.7" width="1.0" height="1.3" fill="#657B83" fill-opacity="0.28"/><rect x="1892.4" y="145.7" width="5.2" height="1.3" fill="#268BD2" fill-opacity="0.5"/><rect x="1897.5" y="145.7" width="1.0" height="1.3" fill="#7B3814" fill-opacity="0.4"/><rect x="1898.6" y="145.7" width="1.0" height="1.3" fill="#D33682" fill-opacity="0.5"/><rect x="1899.6" y="145.7" width="1.0" height="1.3" fill="#657B83" fill-opacity="0.28"/><rect x="1901.7" y="145.7" width="2.1" height="1.3" fill="#D33682" fill-opacity="0.5"/><rect x="1903.8" y="145.7" width="1.0" height="1.3" fill="#7B3814" fill-opacity="0.4"/><rect x="1848.9" y="147.7" width="1.0" height="1.3" fill="#319331" fill-opacity="0.4"/><rect x="1849.9" y="147.7" width="1.0" height="1.3" fill="#657B83" fill-opacity="0.28"/><rect x="1848.9" y="151.9" width="5.2" height="1.3" fill="#586E75" fill-opacity="0.5"/><rect x="1855.1" y="151.9" width="7.2" height="1.3" fill="#268BD2" fill-opacity="0.5"/><rect x="1863.4" y="151.9" width="1.0" height="1.3" fill="#859900" fill-opacity="0.5"/><rect x="1865.5" y="151.9" width="8.3" height="1.3" fill="#268BD2" fill-opacity="0.5"/><rect x="1873.7" y="151.9" width="1.0" height="1.3" fill="#657B83" fill-opacity="0.28"/><rect x="1874.8" y="151.9" width="13.5" height="1.3" fill="#268BD2" fill-opacity="0.5"/><rect x="1888.2" y="151.9" width="1.0" height="1.3" fill="#657B83" fill-opacity="0.28"/><rect x="1889.3" y="151.9" width="13.5" height="1.3" fill="#268BD2" fill-opacity="0.5"/><rect x="1902.7" y="151.9" width="1.0" height="1.3" fill="#657B83" fill-opacity="0.28"/><rect x="1848.9" y="156.0" width="6.2" height="1.3" fill="#859900" fill-opacity="0.5"/><rect x="1855.1" y="156.0" width="1.0" height="1.3" fill="#319331" fill-opacity="0.4"/><rect x="1856.1" y="156.0" width="38.3" height="1.3" fill="#2AA198" fill-opacity="0.5"/><rect x="1894.4" y="156.0" width="1.0" height="1.3" fill="#319331" fill-opacity="0.4"/><rect x="1895.5" y="156.0" width="1.0" height="1.3" fill="#657B83" fill-opacity="0.28"/><rect x="1896.5" y="156.0" width="4.1" height="1.3" fill="#268BD2" fill-opacity="0.5"/><rect x="1900.7" y="156.0" width="1.0" height="1.3" fill="#319331" fill-opacity="0.4"/><rect x="1901.7" y="156.0" width="1.0" height="1.3" fill="#7B3814" fill-opacity="0.4"/><rect x="1902.7" y="156.0" width="3.1" height="1.3" fill="#657B83" fill-opacity="0.28"/><rect x="1905.8" y="156.0" width="1.0" height="1.3" fill="#7B3814" fill-opacity="0.4"/><rect x="1907.9" y="156.0" width="2.1" height="1.3" fill="#586E75" fill-opacity="0.5"/><rect x="1911.0" y="156.0" width="1.0" height="1.3" fill="#7B3814" fill-opacity="0.4"/><rect x="1853.0" y="158.1" width="3.1" height="1.3" fill="#268BD2" fill-opacity="0.5"/><rect x="1856.1" y="158.1" width="1.0" height="1.3" fill="#657B83" fill-opacity="0.28"/><rect x="1857.2" y="158.1" width="5.2" height="1.3" fill="#268BD2" fill-opacity="0.5"/><rect x="1862.4" y="158.1" width="1.0" height="1.3" fill="#0431FA" fill-opacity="0.4"/><rect x="1863.4" y="158.1" width="7.2" height="1.3" fill="#268BD2" fill-opacity="0.5"/><rect x="1870.6" y="158.1" width="1.0" height="1.3" fill="#657B83" fill-opacity="0.28"/><rect x="1872.7" y="158.1" width="1.0" height="1.3" fill="#319331" fill-opacity="0.4"/><rect x="1857.2" y="160.1" width="8.3" height="1.3" fill="#268BD2" fill-opacity="0.5"/><rect x="1865.5" y="160.1" width="1.0" height="1.3" fill="#657B83" fill-opacity="0.28"/><rect x="1867.5" y="160.1" width="1.0" height="1.3" fill="#7B3814" fill-opacity="0.4"/><rect x="1868.6" y="160.1" width="1.0" height="1.3" fill="#D33682" fill-opacity="0.5"/><rect x="1869.6" y="160.1" width="1.0" height="1.3" fill="#657B83" fill-opacity="0.28"/><rect x="1871.7" y="160.1" width="1.0" height="1.3" fill="#D33682" fill-opacity="0.5"/><rect x="1872.7" y="160.1" width="1.0" height="1.3" fill="#7B3814" fill-opacity="0.4"/><rect x="1873.7" y="160.1" width="1.0" height="1.3" fill="#657B83" fill-opacity="0.28"/><rect x="1857.2" y="162.2" width="4.1" height="1.3" fill="#268BD2" fill-opacity="0.5"/><rect x="1861.3" y="162.2" width="1.0" height="1.3" fill="#657B83" fill-opacity="0.28"/><rect x="1863.4" y="162.2" width="1.0" height="1.3" fill="#7B3814" fill-opacity="0.4"/><rect x="1864.4" y="162.2" width="4.1" height="1.3" fill="#B58900" fill-opacity="0.5"/><rect x="1868.6" y="162.2" width="1.0" height="1.3" fill="#657B83" fill-opacity="0.28"/><rect x="1869.6" y="162.2" width="4.1" height="1.3" fill="#B58900" fill-opacity="0.5"/><rect x="1873.7" y="162.2" width="1.0" height="1.3" fill="#7B3814" fill-opacity="0.4"/><rect x="1874.8" y="162.2" width="1.0" height="1.3" fill="#657B83" fill-opacity="0.28"/><rect x="1857.2" y="164.2" width="4.1" height="1.3" fill="#268BD2" fill-opacity="0.5"/><rect x="1861.3" y="164.2" width="1.0" height="1.3" fill="#657B83" fill-opacity="0.28"/><rect x="1863.4" y="164.2" width="4.1" height="1.3" fill="#B58900" fill-opacity="0.5"/><rect x="1867.5" y="164.2" width="1.0" height="1.3" fill="#657B83" fill-opacity="0.28"/><rect x="1857.2" y="166.3" width="5.2" height="1.3" fill="#268BD2" fill-opacity="0.5"/><rect x="1862.4" y="166.3" width="1.0" height="1.3" fill="#657B83" fill-opacity="0.28"/><rect x="1864.4" y="166.3" width="4.1" height="1.3" fill="#B58900" fill-opacity="0.5"/><rect x="1853.0" y="168.4" width="1.0" height="1.3" fill="#319331" fill-opacity="0.4"/><rect x="1854.1" y="168.4" width="1.0" height="1.3" fill="#0431FA" fill-opacity="0.4"/><rect x="1848.9" y="170.4" width="1.0" height="1.3" fill="#7B3814" fill-opacity="0.4"/><rect x="1849.9" y="170.4" width="1.0" height="1.3" fill="#319331" fill-opacity="0.4"/><rect x="1851.0" y="170.4" width="1.0" height="1.3" fill="#657B83" fill-opacity="0.28"/><rect x="1844.8" y="172.5" width="1.0" height="1.3" fill="#0431FA" fill-opacity="0.4"/><rect x="1840.6" y="174.6" width="2.1" height="1.3" fill="#93A1A1" fill-opacity="0.28"/><rect x="1842.7" y="174.6" width="6.2" height="1.3" fill="#268BD2" fill-opacity="0.5"/><rect x="1848.9" y="174.6" width="1.0" height="1.3" fill="#93A1A1" fill-opacity="0.28"/><rect x="1836.5" y="176.6" width="2.1" height="1.3" fill="#93A1A1" fill-opacity="0.28"/><rect x="1838.5" y="176.6" width="3.1" height="1.3" fill="#268BD2" fill-opacity="0.5"/><rect x="1841.7" y="176.6" width="1.0" height="1.3" fill="#93A1A1" fill-opacity="0.28"/><rect x="1832.3" y="178.7" width="2.1" height="1.3" fill="#93A1A1" fill-opacity="0.28"/><rect x="1834.4" y="178.7" width="4.1" height="1.3" fill="#268BD2" fill-opacity="0.5"/><rect x="1838.5" y="178.7" width="1.0" height="1.3" fill="#93A1A1" fill-opacity="0.28"/><rect x="1828.2" y="180.8" width="2.1" height="1.3" fill="#93A1A1" fill-opacity="0.28"/><rect x="1830.3" y="180.8" width="4.1" height="1.3" fill="#268BD2" fill-opacity="0.5"/><rect x="1834.4" y="180.8" width="1.0" height="1.3" fill="#93A1A1" fill-opacity="0.28"/></svg></div>
<div class="abs" style="left:1823px;top:112px;width:1px;height:834px;background:#EFE8D4"></div>
<div class="abs" style="left:1923px;top:112px;width:1px;height:834px;background:#EFE8D4"></div>
<div class="abs" style="left:1924px;top:112px;width:17px;height:2px;background:#72848C"></div>

<!-- ================= activity bar ================= -->
<div id="act"></div>
<svg style="left:1941px;top:41px" width="58" height="905" viewBox="1941 41 58 905" fill="none" stroke="#A89F83" stroke-width="1.7" stroke-linejoin="round" stroke-linecap="round">
  <!-- files -->
  <path d="M1965.100 78.100V58.300a2 2 0 0 1 2-2h10.300l5.600 5.600V76.100a2 2 0 0 1-2 2z"/>
  <path d="M1977.200 56.500v5.600h5.600" stroke-linejoin="miter"/>
  <path d="M1964.800 64.100h-5.600a2 2 0 0 0-2 2v17.200a2 2 0 0 0 2 2h14.200a2 2 0 0 0 2-2v-5"/>
  <!-- search -->
  <circle cx="1974.600" cy="125.700" r="9.300"/>
  <path d="M1967.900 132.700L1958.300 144"/>
  <!-- scm -->
  <circle cx="1964.100" cy="179.500" r="3.700"/>
  <circle cx="1964.100" cy="200.600" r="3.700"/>
  <circle cx="1977.200" cy="185.100" r="3.700"/>
  <path d="M1964.100 183.200v13.700M1977.200 188.800c0 5.500-4.500 5-8 5.500-2.500.4-5.100 1.200-5.100 3.200"/>
  <!-- debug -->
  <path d="M1965.700 247.200V235.300l19 11.600-11.400 8.400"/>
  <ellipse cx="1963.300" cy="257.800" rx="3.900" ry="5.300"/>
  <path d="M1959.600 255.800h7.400M1959.400 257.800l-3.200-.1M1967.200 257.800l3.200-.1M1959.800 254.300l-2.900-2.500M1966.800 254.300l2.900-2.500M1959.900 261.300l-2.900 2.500M1966.700 261.300l2.900 2.500M1961.200 252.800c.3-1.500 3.900-1.500 4.200 0" stroke-width="1.500"/>
  <!-- extensions -->
  <path d="M1958.500 300.900h7a2 2 0 0 1 2 2v9.300h9.800a2 2 0 0 1 2 2v7.300a2 2 0 0 1-2 2h-18.800a2 2 0 0 1-2-2v-18.600a2 2 0 0 1 2-2zM1956.500 312.200h11v11.300"/>
  <rect x="1973.500" y="295.300" width="11.700" height="11.600" rx="2"/>
  <!-- beaker -->
  <path d="M1965.200 356.500h11M1967.400 356.600v9.600l-7 13.200c-.5 1 .1 1.800 1.100 1.800h18.400c1 0 1.600-.8 1.100-1.800l-7-13.200v-9.600M1964.200 373.100h13.400"/>
  <!-- remote / boxes -->
  <rect x="1957.800" y="475.300" width="12.100" height="12.100" rx="2"/>
  <rect x="1972.300" y="489.500" width="12" height="12.100" rx="2"/>
  <path d="M1963.900 487.500v5.500a2.600 2.600 0 0 0 2.600 2.600h5.700"/>
  <!-- account -->
  <circle cx="1970.700" cy="856.200" r="13.700" stroke-width="1.600"/>
  <circle cx="1970.900" cy="853.400" r="6.300" stroke-width="1.600"/>
  <path d="M1962 865.900c1.400-3.800 4.800-6.200 8.900-6.200s7.500 2.400 8.900 6.200" stroke-width="1.600"/>
  <!-- gear -->
  <circle cx="1970.700" cy="915.900" r="3.400"/>
  <path id="gear" d="M1968.32 906.60L1968.33 902.10L1973.07 902.10L1973.08 906.60L1975.60 907.64L1978.78 904.47L1982.13 907.82L1978.96 911.00L1980.00 913.52L1984.50 913.53L1984.50 918.27L1980.00 918.28L1978.96 920.80L1982.13 923.98L1978.78 927.33L1975.60 924.16L1973.08 925.20L1973.07 929.70L1968.33 929.70L1968.32 925.20L1965.80 924.16L1962.62 927.33L1959.27 923.98L1962.44 920.80L1961.40 918.28L1956.90 918.27L1956.90 913.53L1961.40 913.52L1962.44 911.00L1959.27 907.82L1962.62 904.47L1965.80 907.64Z"/>
</svg>
<!-- copilot head (activity) -->
<svg style="left:1959px;top:419px" width="24.500" height="19" viewBox="0 0 24.500 19">
  <path d="M12.250.3c-3.600 0-6.800 1.300-8.200 4-.9 1.500-1 3-1.200 4.300C1.200 9.300.2 10.600.2 12.200c0 1.700 1.200 3 2.900 3.600C5.400 17.600 8.700 18.700 12.250 18.700s6.850-1.100 9.150-2.900c1.700-.6 2.900-1.900 2.900-3.600 0-1.600-1-2.900-2.650-3.600-.2-1.300-.3-2.800-1.200-4.300-1.400-2.700-4.600-4-8.200-4z" fill="#A89F83"/>
  <path d="M5.600 10.800c2-.9 4.300-1.300 6.650-1.300s4.650.4 6.650 1.300c.5 1.700.4 3.300.1 4.500-1.800 1.200-4.200 1.900-6.750 1.900s-4.950-.7-6.750-1.900c-.3-1.200-.4-2.800.1-4.500z" fill="#DDD6C1"/>
  <ellipse cx="7.900" cy="5.600" rx="3.400" ry="2.800" fill="#D2CBB5"/>
  <ellipse cx="16.600" cy="5.600" rx="3.400" ry="2.800" fill="#D2CBB5"/>
  <rect x="8.900" y="11.500" width="1.700" height="3.600" rx=".8" fill="#A89F83"/>
  <rect x="13.900" y="11.500" width="1.700" height="3.600" rx=".8" fill="#A89F83"/>
</svg>
<div class="abs" style="left:1971.300px;top:915.800px;width:19.800px;height:19.800px;border-radius:50%;background:#B58900;color:#fff;font-size:12.500px;font-weight:bold;text-align:center;line-height:20px">1</div>


<!-- ================= hover ================= -->
<div id="hover">
  <div class="m" style="top:5.3px;line-height:22px;letter-spacing:0"><span style="color:#657B83">(</span><span class="v">property</span><span style="color:#657B83">)</span> <span class="v">bundleStrategy</span><span class="k">?:</span> <span class="s">"split"</span> <span class="k">|</span> <span class="s">"single"</span> <span class="k">|</span> <span class="nl">undefined</span></div>
  <div style="top:39px;line-height:22px">If <code>'split'</code>, splits the app up into multiple .js/.css files so that they are loaded lazily as the user navigates around the app. This</div>
  <div style="top:61px;line-height:22px">is the default, and is recommended for most scenarios. If <code>'single'</code>, creates just one .js bundle and one .css file containing</div>
  <div style="top:84.2px;line-height:22px">code for the entire app.</div>
  <div style="top:115.3px;line-height:22px">When using <code>'split'</code>, you can also adjust the bundling behaviour by setting <code class="lk">output.experimentalMinChunkSize</code> and</div>
  <div style="top:137.5px;line-height:22px"><code class="lk" style="margin-right:1.5px">output.manualChunks</code>inside your Vite config's <code class="lk">build.rollupOptions</code>.</div>
  <div style="top:171px;left:11.100px;line-height:22px;font-style:italic">@default</div>
  <div class="m s" style="top:202px;line-height:22px;letter-spacing:0">'split'</div>
  <div style="top:236px;left:11.100px;line-height:22px;letter-spacing:-.25px"><i>@since</i> <span style="display:inline-block;transform:scaleX(.76);margin:0 -1.9px">—</span> 2.13.0</div>
</div>

<!-- ================= status bar ================= -->
<div id="status">
  <div class="abs" style="left:0;top:0;width:39px;height:26px;background:#AC9D57"></div>
  <span style="left:71px">0</span>
  <span style="left:106px">0</span>
  <span style="left:157px">0</span>
  <span style="left:1457px;letter-spacing:.1px">Ln 1, Col 1</span>
  <span style="left:1554px;letter-spacing:.05px">Tab Size: 4</span>
  <span style="left:1650px;letter-spacing:.2px">UTF-8</span>
  <span style="left:1715px;letter-spacing:.2px">LF</span>
  <span style="left:1751.3px;letter-spacing:3.2px;font-size:14px">{}</span>
  <span style="left:1774px;letter-spacing:.2px">HTML</span>
  <span style="left:1893px;letter-spacing:.2px">Prettier</span>
</div>

<svg style="left:0;top:940px" width="1999" height="31" viewBox="0 940 1999 31" fill="none" stroke="#586E75" stroke-width="1.2" stroke-linecap="round" stroke-linejoin="round">
  <!-- remote -->
  <path d="M12.700 956.300l5.400 4.600-5.400 4.700M23 952.300l-4.500 4.400 4.500 4.400" stroke="#fff" stroke-width="1.400" stroke-linecap="butt" stroke-linejoin="miter"/>
  <!-- error -->
  <circle cx="57.500" cy="959.100" r="6.800"/>
  <path d="M54.600 956.200l5.800 5.800M60.400 956.200l-5.800 5.800"/>
  <!-- warning -->
  <path d="M92.800 952.400l-6.700 12.600h13.400z"/>
  <path d="M92.800 956.800v4.200M92.800 962.700v.4" stroke-width="1.500" stroke-linecap="butt"/>
  <!-- radio tower -->
  <path d="M144.200 958.200l-4.500 7.600M144.200 958.200l4.500 7.600M141.300 963.100h5.800"/>
  <circle cx="144.200" cy="956.800" r="1.300"/>
  <path d="M141 953.800a4.200 4.200 0 0 0 0 6M147.400 953.800a4.200 4.200 0 0 1 0 6M139.300 952.600a6.400 6.400 0 0 0 0 8.600M149.100 952.600a6.400 6.400 0 0 1 0 8.600"/>
  <!-- copilot off -->
  <path d="M1838.200 954.200c.5-1.500 2.100-1.800 4-1.500 1.200.2 1.800.8 2 1.500.2-.7.800-1.300 2-1.500 1.900-.3 3.500 0 4 1.500.5 1.300.3 2.600-.1 3.500M1850.500 958.600c.8.900 1.200 1.800 1.200 3.400-1.500 2.600-5 4.100-9.100 4.100s-7.600-1.500-9.100-4.100c0-1.600.4-2.500 1.200-3.400" stroke-width="1.400"/>
  <path d="M1845.300 960.600v2.200" stroke-width="1.400"/>
  <path d="M1834.200 952.600l16.400 13.800" stroke-width="1.500"/>
  <!-- check-all -->
  <path d="M1871 960.600l2.600 3.900M1875.400 960.600l2.600 3.900 9.300-10.200M1877.600 961l5.500-6.600" stroke-width="1.150" stroke-linecap="butt"/>
  <!-- bell -->
  <path d="M1968 963.400h11.800c-1-1-1.500-2.200-1.500-3.800v-2M1969.500 963.400c1-1 1.300-2.200 1.300-3.800v-2.300c0-2.300 1.400-4.100 3.600-4.300.6-.1 1.200 0 1.700.2M1972.400 964.600c.3.900.8 1.400 1.600 1.400s1.300-.5 1.600-1.400"/>
  <circle cx="1978.200" cy="954.300" r="2.700" fill="#586E75" stroke="none"/>
</svg>
</body></html>
